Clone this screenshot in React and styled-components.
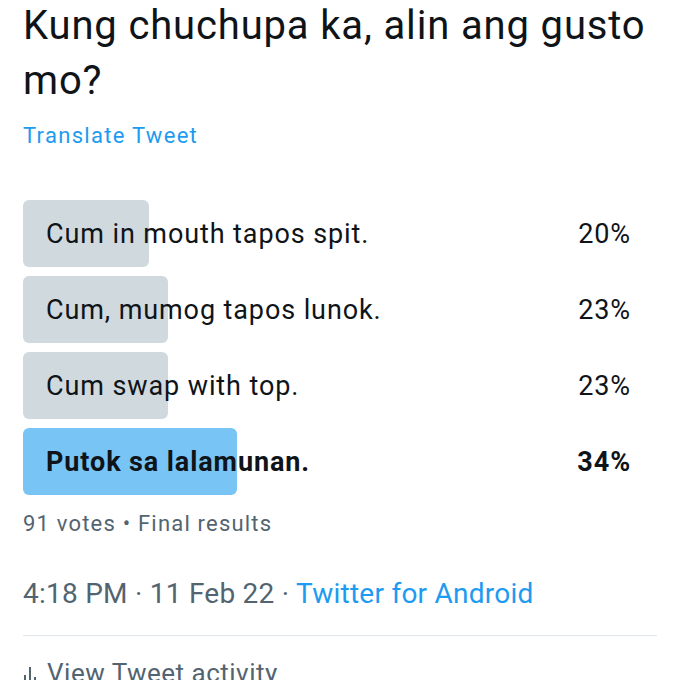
import React from "react";
import styled, { createGlobalStyle } from "styled-components";

const Global = createGlobalStyle`
  html, body {
    margin: 0;
    padding: 0;
    background: #ffffff;
  }
  body {
    font-family: Roboto, "Liberation Sans", sans-serif;
    color: #0f1419;
  }
`;

const Page = styled.div`
  width: 680px;
  height: 680px;
  overflow: hidden;
  box-sizing: border-box;
  padding: 0 23px;
  display: flex;
  flex-direction: column;

  & > * {
    flex-shrink: 0;
  }
`;

const Title = styled.div`
  font-size: 40px;
  line-height: 55px;
  margin-top: -2px;
  letter-spacing: 0.85px;
`;

const Translate = styled.div`
  font-size: 22px;
  line-height: 30px;
  color: #1d9bf0;
  margin-top: 13px;
  letter-spacing: 1.3px;
`;

const Poll = styled.div`
  margin-top: 49px;
  display: flex;
  flex-direction: column;
  gap: 9px;
  width: 630px;
`;

const Option = styled.div`
  position: relative;
  height: 67px;
  display: flex;
  align-items: center;
  justify-content: space-between;
  padding: 0 22px 0 23px;
  font-size: 27px;
  letter-spacing: 0.9px;
  font-weight: ${(p) => (p.$winner ? 700 : 400)};
`;

const Fill = styled.div`
  position: absolute;
  left: 0;
  top: 0;
  bottom: 0;
  border-radius: 6px;
  background: ${(p) => (p.$winner ? "#78c4f5" : "#cfd9de")};
`;

const Label = styled.span`
  position: relative;
`;

const Percent = styled.span`
  position: relative;
`;

const Votes = styled.div`
  margin-top: 16px;
  font-size: 22px;
  letter-spacing: 1.2px;
  color: #536471;
`;

const Meta = styled.div`
  margin-top: 41px;
  font-size: 28px;
  letter-spacing: 0.25px;
  color: #536471;
`;

const Link = styled.span`
  color: #1d9bf0;
`;

const Divider = styled.div`
  margin-top: 25px;
  height: 1px;
  background: #e1e6ea;
  width: 634px;
`;

const Activity = styled.div`
  margin-top: 22px;
  display: flex;
  align-items: center;
  gap: 10px;
  font-size: 26px;
  letter-spacing: 0.5px;
  color: #536471;
`;

const options = [
  { label: "Cum in mouth tapos spit.", pct: 20 },
  { label: "Cum, mumog tapos lunok.", pct: 23 },
  { label: "Cum swap with top.", pct: 23 },
  { label: "Putok sa lalamunan.", pct: 34, winner: true },
];

export default function App() {
  return (
    <Page>
      <Global />
      <Title>Kung chuchupa ka, alin ang gusto mo?</Title>
      <Translate>Translate Tweet</Translate>
      <Poll>
        {options.map((o) => (
          <Option key={o.label} $winner={o.winner}>
            <Fill $winner={o.winner} style={{ width: `${o.pct}%` }} />
            <Label>{o.label}</Label>
            <Percent>{o.pct}%</Percent>
          </Option>
        ))}
      </Poll>
      <Votes>91 votes • Final results</Votes>
      <Meta>
        4:18 PM · 11 Feb 22 · <Link>Twitter for Android</Link>
      </Meta>
      <Divider />
      <Activity>
        <svg width="14" height="24" viewBox="0 0 14 24" fill="none" stroke="#536471" strokeWidth="2">
          <path d="M2 14v8M7 6v16M12 16v6" />
        </svg>
        View Tweet activity
      </Activity>
    </Page>
  );
}
